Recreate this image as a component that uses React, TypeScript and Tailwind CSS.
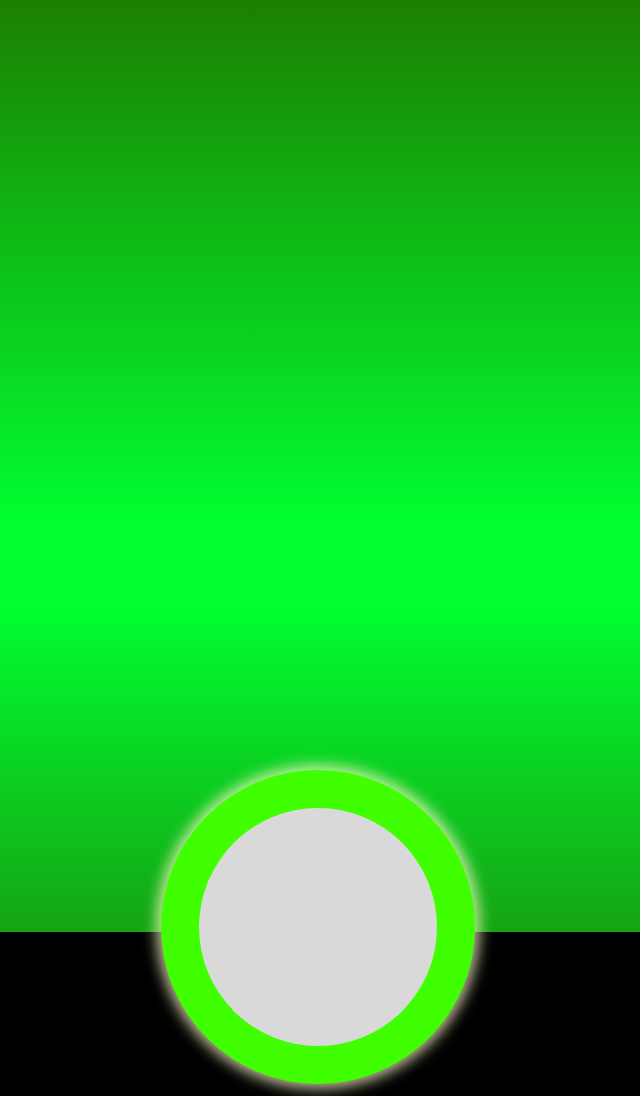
export default function App() {
  return (
    <div className="relative w-[640px] h-[1096px] bg-black overflow-hidden">
      <div className="h-[932px] w-full bg-[linear-gradient(to_bottom,#1c7f00_0%,#00ff30_56%,#00ff30_65%,#15a413_100%)]" />
      <div className="absolute left-[161px] top-[770px] w-[314px] h-[314px] rounded-full bg-[#3fff00] flex items-center justify-center shadow-[0_0_14px_5px_rgba(255,250,200,0.75)]">
        <div className="w-[238px] h-[238px] rounded-full bg-[#d9d9d9]" />
      </div>
    </div>
  );
}
